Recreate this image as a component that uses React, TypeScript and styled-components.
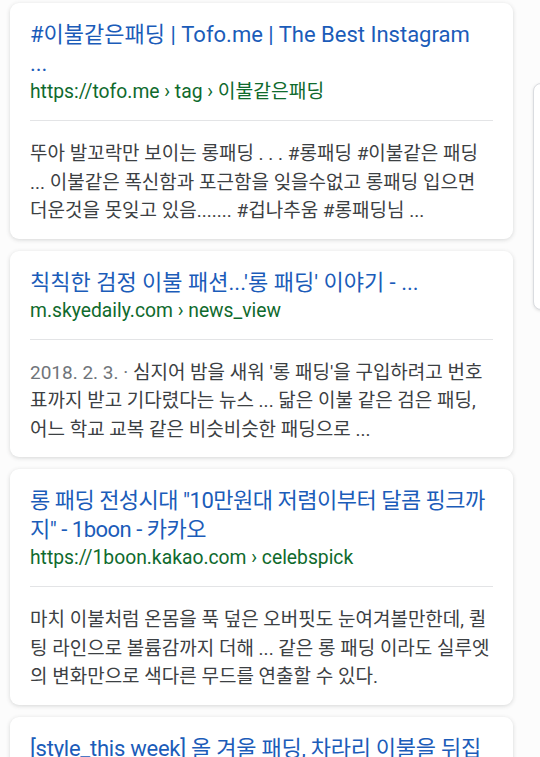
import styled, { createGlobalStyle } from "styled-components";

const GlobalStyle = createGlobalStyle`
  html, body {
    margin: 0;
    padding: 0;
    background: #fcfcfc;
  }
  body {
    font-family: Roboto, "Noto Sans CJK KR", "Noto Sans", sans-serif;
    -webkit-font-smoothing: antialiased;
  }
`;

const Page = styled.div`
  position: relative;
  width: 540px;
  height: 757px;
  overflow: hidden;
  box-sizing: border-box;
  padding: 3px 27px 0 10px;
  display: flex;
  flex-direction: column;
  gap: 12px;
`;

const Card = styled.div`
  background: #ffffff;
  border-radius: 9px;
  box-shadow: 0 1px 4px rgba(60, 64, 67, 0.2);
  padding: 17px 20px 13px;
  flex-shrink: 0;
`;

const Title = styled.div<{ $spacing?: number }>`
  color: #1b5cb9;
  font-size: 22px;
  line-height: 29px;
  padding-right: 3px;
  letter-spacing: ${(p) => p.$spacing ?? 0}px;
`;

const Url = styled.div`
  color: #0f6a2d;
  font-size: 19.3px;
  line-height: 28px;
  white-space: nowrap;
  margin-bottom: 14px;
`;

const Divider = styled.div`
  height: 1px;
  background: #e3e4e6;
`;

const Snippet = styled.div`
  color: #3c4043;
  font-size: 19px;
  line-height: 28.5px;
  margin-top: 19px;
`;

const Date = styled.span`
  color: #70757a;
`;

const SidePeek = styled.div`
  position: absolute;
  top: 83px;
  left: 533px;
  width: 20px;
  height: 225px;
  background: #ffffff;
  border: 1px solid #dadce0;
  border-radius: 8px;
  box-shadow: 0 1px 3px rgba(60, 64, 67, 0.15);
`;

interface IResult {
  title: string;
  url: string;
  date?: string;
  snippet?: string;
  spacing?: number;
}

const results: IResult[] = [
  {
    title: "#이불같은패딩 | Tofo.me | The Best Instagram ...",
    url: "https://tofo.me › tag › 이불같은패딩",
    snippet:
      "뚜아 발꼬락만 보이는 롱패딩 . . . #롱패딩 #이불같은 패딩 ... 이불같은 폭신함과 포근함을 잊을수없고 롱패딩 입으면 더운것을 못잊고 있음....... #겁나추움 #롱패딩님 ...",
  },
  {
    title: "칙칙한 검정 이불 패션...'롱 패딩' 이야기 - ...",
    url: "m.skyedaily.com › news_view",
    date: "2018. 2. 3. · ",
    snippet:
      "심지어 밤을 새워 '롱 패딩'을 구입하려고 번호표까지 받고 기다렸다는 뉴스 ... 닮은 이불 같은 검은 패딩, 어느 학교 교복 같은 비슷비슷한 패딩으로 ...",
  },
  {
    title: "롱 패딩 전성시대 \"10만원대 저렴이부터 달콤 핑크까지\" - 1boon - 카카오",
    url: "https://1boon.kakao.com › celebspick",
    spacing: -0.5,
    snippet:
      "마치 이불처럼 온몸을 푹 덮은 오버핏도 눈여겨볼만한데, 퀼팅 라인으로 볼륨감까지 더해 ... 같은 롱 패딩 이라도 실루엣의 변화만으로 색다른 무드를 연출할 수 있다.",
  },
  {
    title: "[style_this week] 올 겨울 패딩, 차라리 이불을 뒤집어쓰자",
    url: "",
    spacing: -0.25,
  },
];

function App() {
  return (
    <>
      <GlobalStyle />
      <Page>
        {results.map((r, i) => (
          <Card key={i}>
            <Title $spacing={r.spacing}>{r.title}</Title>
            {r.url && <Url>{r.url}</Url>}
            {r.snippet && (
              <>
                <Divider />
                <Snippet>
                  {r.date && <Date>{r.date}</Date>}
                  {r.snippet}
                </Snippet>
              </>
            )}
          </Card>
        ))}
        <SidePeek />
      </Page>
    </>
  );
}

export default App;
